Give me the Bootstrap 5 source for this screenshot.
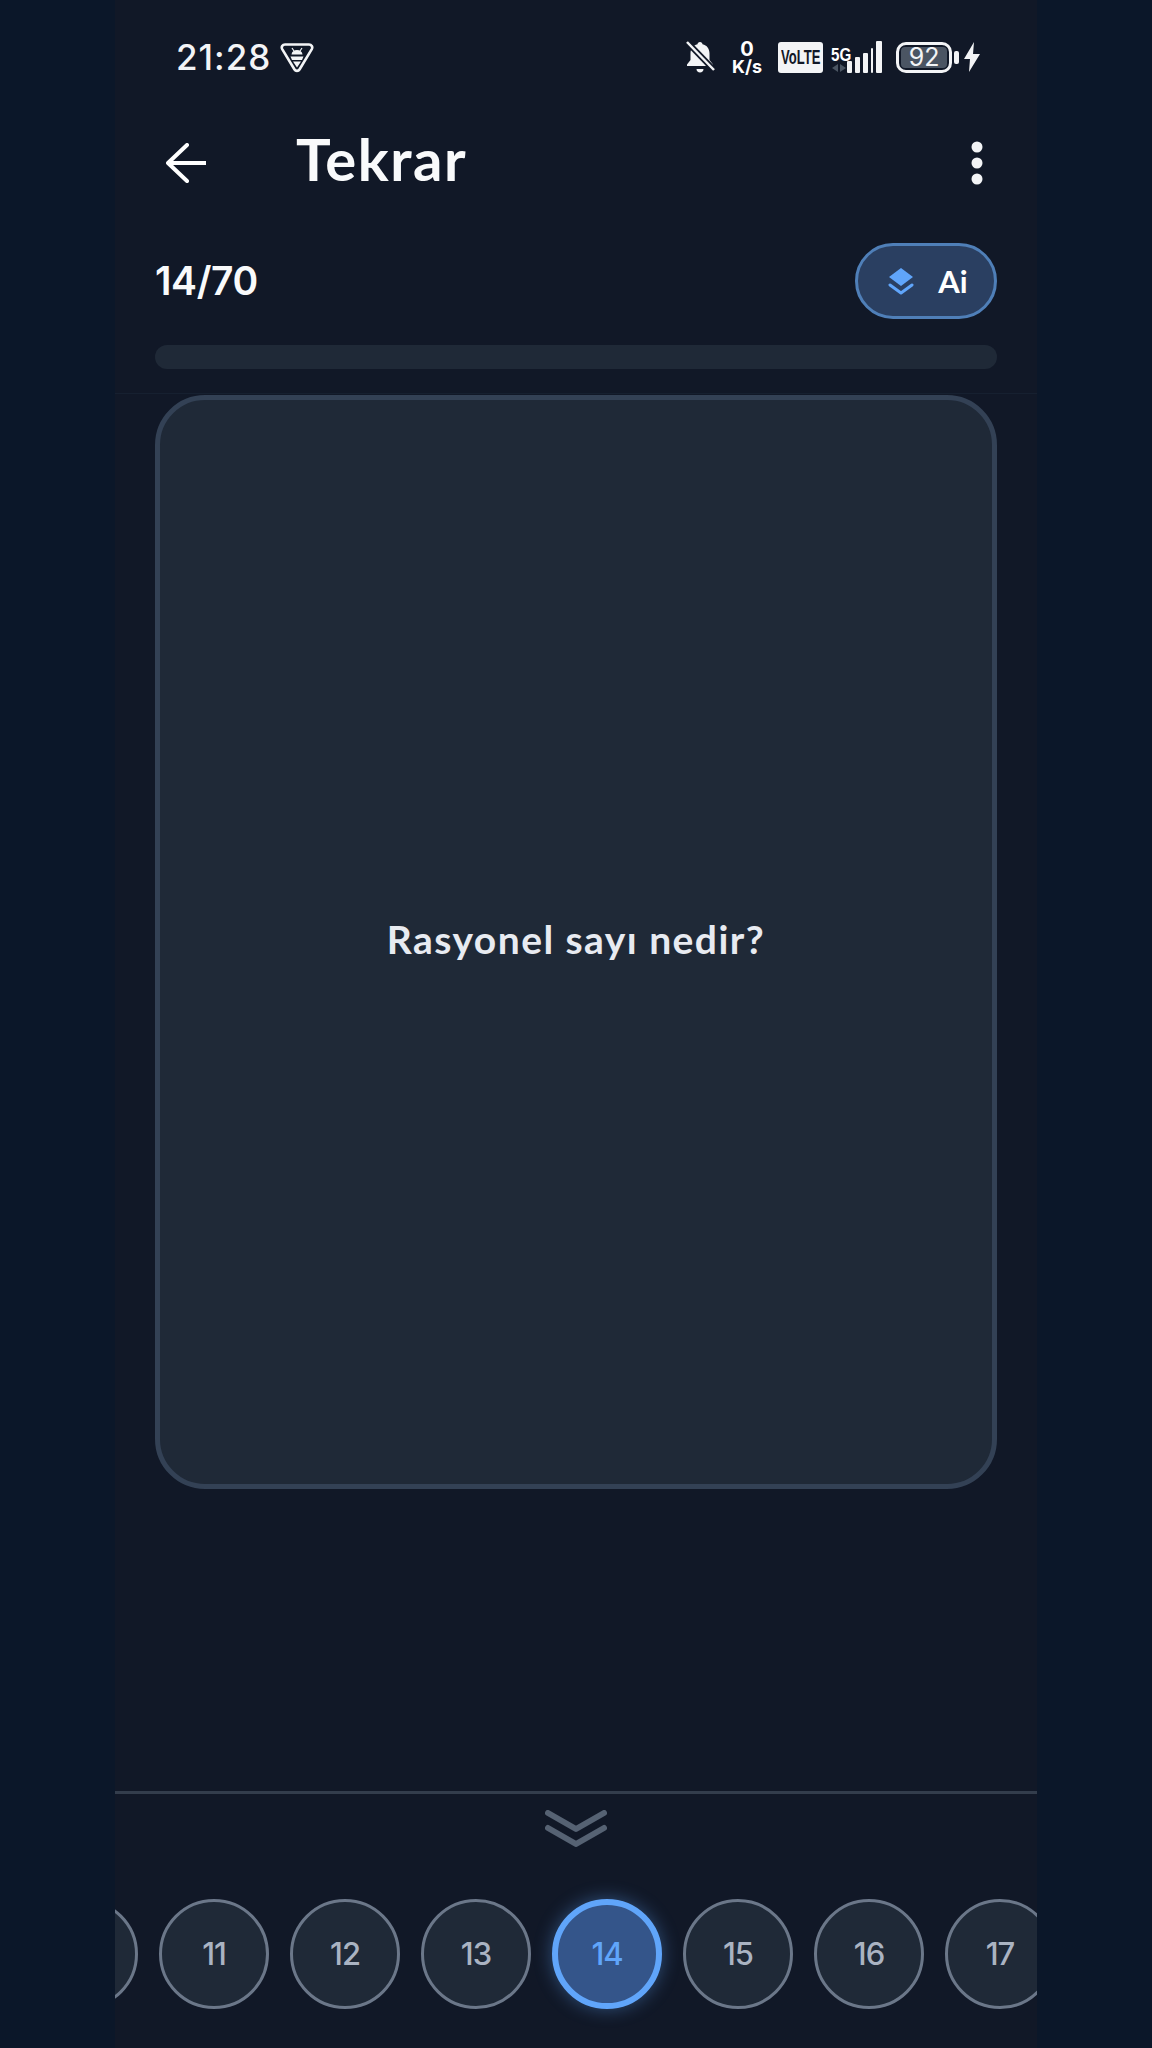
<!DOCTYPE html>
<html lang="tr">

<head>
    <meta charset="UTF-8" />
    <meta name="viewport" content="width=device-width, initial-scale=1.0" />
    <title>Tekrar</title>
    <link href="https://cdn.jsdelivr.net/npm/bootstrap@5.3.3/dist/css/bootstrap.min.css" rel="stylesheet" />
    <style>
        body { background: #0b1729; font-family: "Lato", "Noto Sans", sans-serif; color: #fff; }
        .phone { width: 922px; height: 2048px; background: #111827; overflow: hidden; }

        /* status bar */
        .status-row { height: 90px; padding: 24px 57px 0 61px; }
        .clock { font-family: "Inter", sans-serif; font-size: 35px; font-weight: 500; letter-spacing: 1px; color: #f3f4f6; line-height: 1; }
        .logo-gap { margin-left: 9px; }
        .speed { font-family: "Inter", sans-serif; font-weight: 700; font-size: 18px; line-height: 16px; text-align: center; width: 34px; margin-left: 14px; }
        .speed-zero { font-size: 20px; line-height: 20px; display: block; }
        .volte { width: 45px; height: 31px; background: #f3f4f6; color: #111827; border-radius: 3px; margin-left: 14px; overflow: hidden; }
        .volte-txt { display: inline-block; font-family: "Liberation Sans", sans-serif; font-weight: 700; font-size: 21px; transform: scaleX(.62); white-space: nowrap; }
        .net-col { width: 21px; margin-left: 8px; }
        .net-five { display: inline-block; font-family: "Liberation Sans", sans-serif; font-weight: 700; font-size: 19px; line-height: 16px; transform: scaleX(.8); transform-origin: left center; white-space: nowrap; }
        .bars { margin-left: -5px; }
        .batt { width: 56px; height: 31px; border: 3px solid #f3f4f6; border-radius: 10px; padding: 2px; margin-left: 13px; }
        .batt-inner { background: #4b5563; border-radius: 4px; font-family: "Inter", sans-serif; font-size: 25px; line-height: 1; color: #f3f4f6; }
        .batt-nub { margin-left: 2px; }
        .bolt { margin-left: 5px; }

        /* header */
        .top-row { height: 142px; padding: 3px 53px 0 51px; }
        .title-txt { font-size: 58px; font-weight: 700; letter-spacing: 1.500px; margin: 0 0 8px 90px; line-height: 1; color: #f9fafb; }

        /* progress zone */
        .body-zone { padding: 0 40px; }
        .count-row { height: 76px; margin-top: 11px; }
        .count-txt { font-family: "Inter", sans-serif; font-size: 39px; font-weight: 600; letter-spacing: -.4px; color: #f9fafb; }
        .ai-pill { width: 142px; height: 76px; border: 3px solid #4f7fb8; background: #2a3f61; color: #fff; border-radius: 38px; font-size: 31px; font-weight: 700; gap: 24px; padding: 0 0 0 4px; }
        .ai-pill:hover { background: #2a3f61; border-color: #4f7fb8; color: #fff; }
        .track { height: 24px; margin-top: 26px; background: #1f2937; border-radius: 12px; }
        .faint-line { height: 1px; margin-top: 24px; background: #162030; }

        /* flash card */
        .flash { height: 1094px; margin: 1px 40px 0; background: #1f2937; border: 5px solid #334155; border-radius: 50px; color: #e5e7eb; }
        .flash-q { font-size: 39px; font-weight: 700; letter-spacing: 1.450px; margin: 0 0 6px; color: #e8ebf1; }

        /* bottom strip */
        .strip-line { height: 3px; margin-top: 302px; background: #333d4c; }
        .chev-wrap { padding-top: 16px; height: 105px; }
        .strip { gap: 21px; margin-left: -87px; }
        .num-dot { width: 110px; height: 110px; flex: 0 0 110px; background: #1f2937; border: 3px solid #6b7789; color: #aab3c2; font-family: "Inter", sans-serif; font-size: 31px; font-weight: 500; letter-spacing: -1px; border-radius: 50%; }
        .num-dot.now { background: #34558a; border: 6px solid #60a5fa; color: #60a5fa; box-shadow: 0 0 18px rgba(96, 165, 250, .4); }
    </style>
</head>

<body>
    <div class="phone mx-auto d-flex flex-column">

        <!-- STATUS BAR -->
        <div class="status-row d-flex align-items-center justify-content-between">
            <div class="d-flex align-items-center">
                <span class="clock">21:28</span>
                <svg class="logo-gap" width="34" height="31" viewBox="0 0 34 31">
                    <path d="M5 2.500h24c2.500 0 4 2.500 2.800 4.600L19.500 27.500c-1.100 1.800-3.900 1.800-5 0L2.200 7.100C1 5 2.500 2.500 5 2.500z" fill="none" stroke="#f3f4f6" stroke-width="2.600" stroke-linejoin="round" />
                    <path d="M11.500 12.500c.3-2.800 2.500-4.500 5.500-4.500s5.200 1.700 5.500 4.500z" fill="#f3f4f6" />
                    <path d="M12 6l2 3M22 6l-2 3" stroke="#f3f4f6" stroke-width="1.200" />
                    <path d="M10.500 14.500h13l-1.500 3.500H12zM13 19.500h8L17 25.500z" fill="#f3f4f6" />
                </svg>
            </div>
            <div class="d-flex align-items-center">
                <svg width="32" height="36" viewBox="0 0 32 36">
                    <path d="M16 3c1.500 0 2.500 1 2.500 2.300 4.500 1 7 4.500 7 9.200v6.500l3.500 4.500v1.500H3v-1.500l3.500-4.500v-6.500c0-4.700 2.500-8.200 7-9.200C13.500 4 14.500 3 16 3z" fill="#f3f4f6" />
                    <path d="M12.500 30h7c0 2-1.500 3.500-3.500 3.500s-3.500-1.500-3.500-3.500z" fill="#f3f4f6" />
                    <path d="M3 3l27 28" stroke="#111827" stroke-width="6" />
                    <path d="M3 3l27 28" stroke="#f3f4f6" stroke-width="2.500" />
                </svg>
                <div class="speed"><span class="speed-zero">0</span>K/s</div>
                <div class="volte d-flex align-items-center justify-content-center"><span class="volte-txt">VoLTE</span></div>
                <div class="d-flex align-items-end">
                    <div class="net-col d-flex flex-column">
                        <span class="net-five">5G</span>
                        <svg width="16" height="10" viewBox="0 0 16 10">
                            <path d="M7 1v8L1 5zM9 1v8l6-4z" fill="#4b5563" />
                        </svg>
                    </div>
                    <svg class="bars" width="36" height="32" viewBox="0 0 36 32">
                        <rect x="0" y="20" width="5" height="12" rx="1" fill="#f3f4f6" />
                        <rect x="8" y="16" width="5" height="16" rx="1" fill="#f3f4f6" />
                        <rect x="16" y="12" width="5" height="20" rx="1" fill="#f3f4f6" />
                        <rect x="24" y="7" width="2" height="25" rx="1" fill="#f3f4f6" />
                        <rect x="29" y="0" width="6" height="32" rx="1" fill="#f3f4f6" />
                    </svg>
                </div>
                <div class="batt d-flex">
                    <div class="batt-inner flex-fill d-flex align-items-center justify-content-center">92</div>
                </div>
                <svg class="batt-nub" width="5" height="13" viewBox="0 0 5 13">
                    <rect width="5" height="13" rx="2" fill="#f3f4f6" />
                </svg>
                <svg class="bolt" width="16" height="30" viewBox="0 0 16 30">
                    <path d="M10 0L0 17h6l-1 13 11-18H9z" fill="#f3f4f6" />
                </svg>
            </div>
        </div>

        <!-- HEADER -->
        <div class="top-row d-flex align-items-center justify-content-between">
            <div class="d-flex align-items-center">
                <svg width="40" height="40" viewBox="0 0 40 40">
                    <path d="M21 2L2 20l19 18M2 20h38" fill="none" stroke="#fff" stroke-width="4" stroke-linecap="round" stroke-linejoin="round" />
                </svg>
                <h1 class="title-txt">Tekrar</h1>
            </div>
            <svg width="14" height="48" viewBox="0 0 14 48">
                <circle cx="7" cy="8" r="5.500" fill="#f3f4f6" />
                <circle cx="7" cy="24" r="5.500" fill="#f3f4f6" />
                <circle cx="7" cy="40" r="5.500" fill="#f3f4f6" />
            </svg>
        </div>

        <!-- COUNT + PROGRESS -->
        <div class="body-zone">
            <div class="count-row d-flex align-items-center justify-content-between">
                <span class="count-txt">14/70</span>
                <button type="button" class="btn ai-pill d-flex align-items-center justify-content-center">
                    <svg width="26" height="28" viewBox="0 0 26 28">
                        <path d="M13 1l12 9-12 9L1 10z" fill="#60a5fa" />
                        <path d="M2 18l11 8 11-8" fill="none" stroke="#60a5fa" stroke-width="3" stroke-linecap="round" stroke-linejoin="round" />
                    </svg>
                    <span>Ai</span>
                </button>
            </div>
            <div class="track"></div>
        </div>
        <div class="faint-line"></div>

        <!-- CARD -->
        <div class="flash card d-flex align-items-center justify-content-center">
            <p class="flash-q">Rasyonel sayı nedir?</p>
        </div>

        <!-- BOTTOM STRIP -->
        <div class="strip-line"></div>
        <div class="chev-wrap d-flex justify-content-center">
            <svg width="62" height="37" viewBox="0 0 62 37">
                <path d="M3 3l28 16L59 3" fill="none" stroke="#566273" stroke-width="6" stroke-linecap="round" stroke-linejoin="round" />
                <path d="M3 18l28 16 28-16" fill="none" stroke="#566273" stroke-width="6" stroke-linecap="round" stroke-linejoin="round" />
            </svg>
        </div>
        <div class="strip d-flex" id="strip"></div>
    </div>

    <script>
        // bottom number strip
        const strip = document.getElementById('strip');
        for (let n = 10; n <= 17; n++) {
            const cls = n === 14 ? 'num-dot now' : 'num-dot';
            strip.innerHTML += `<div class="${cls} d-flex align-items-center justify-content-center">${n}</div>`;
        }
    </script>
    <script src="https://cdn.jsdelivr.net/npm/bootstrap@5.3.3/dist/js/bootstrap.bundle.min.js"></script>
</body>

</html>
